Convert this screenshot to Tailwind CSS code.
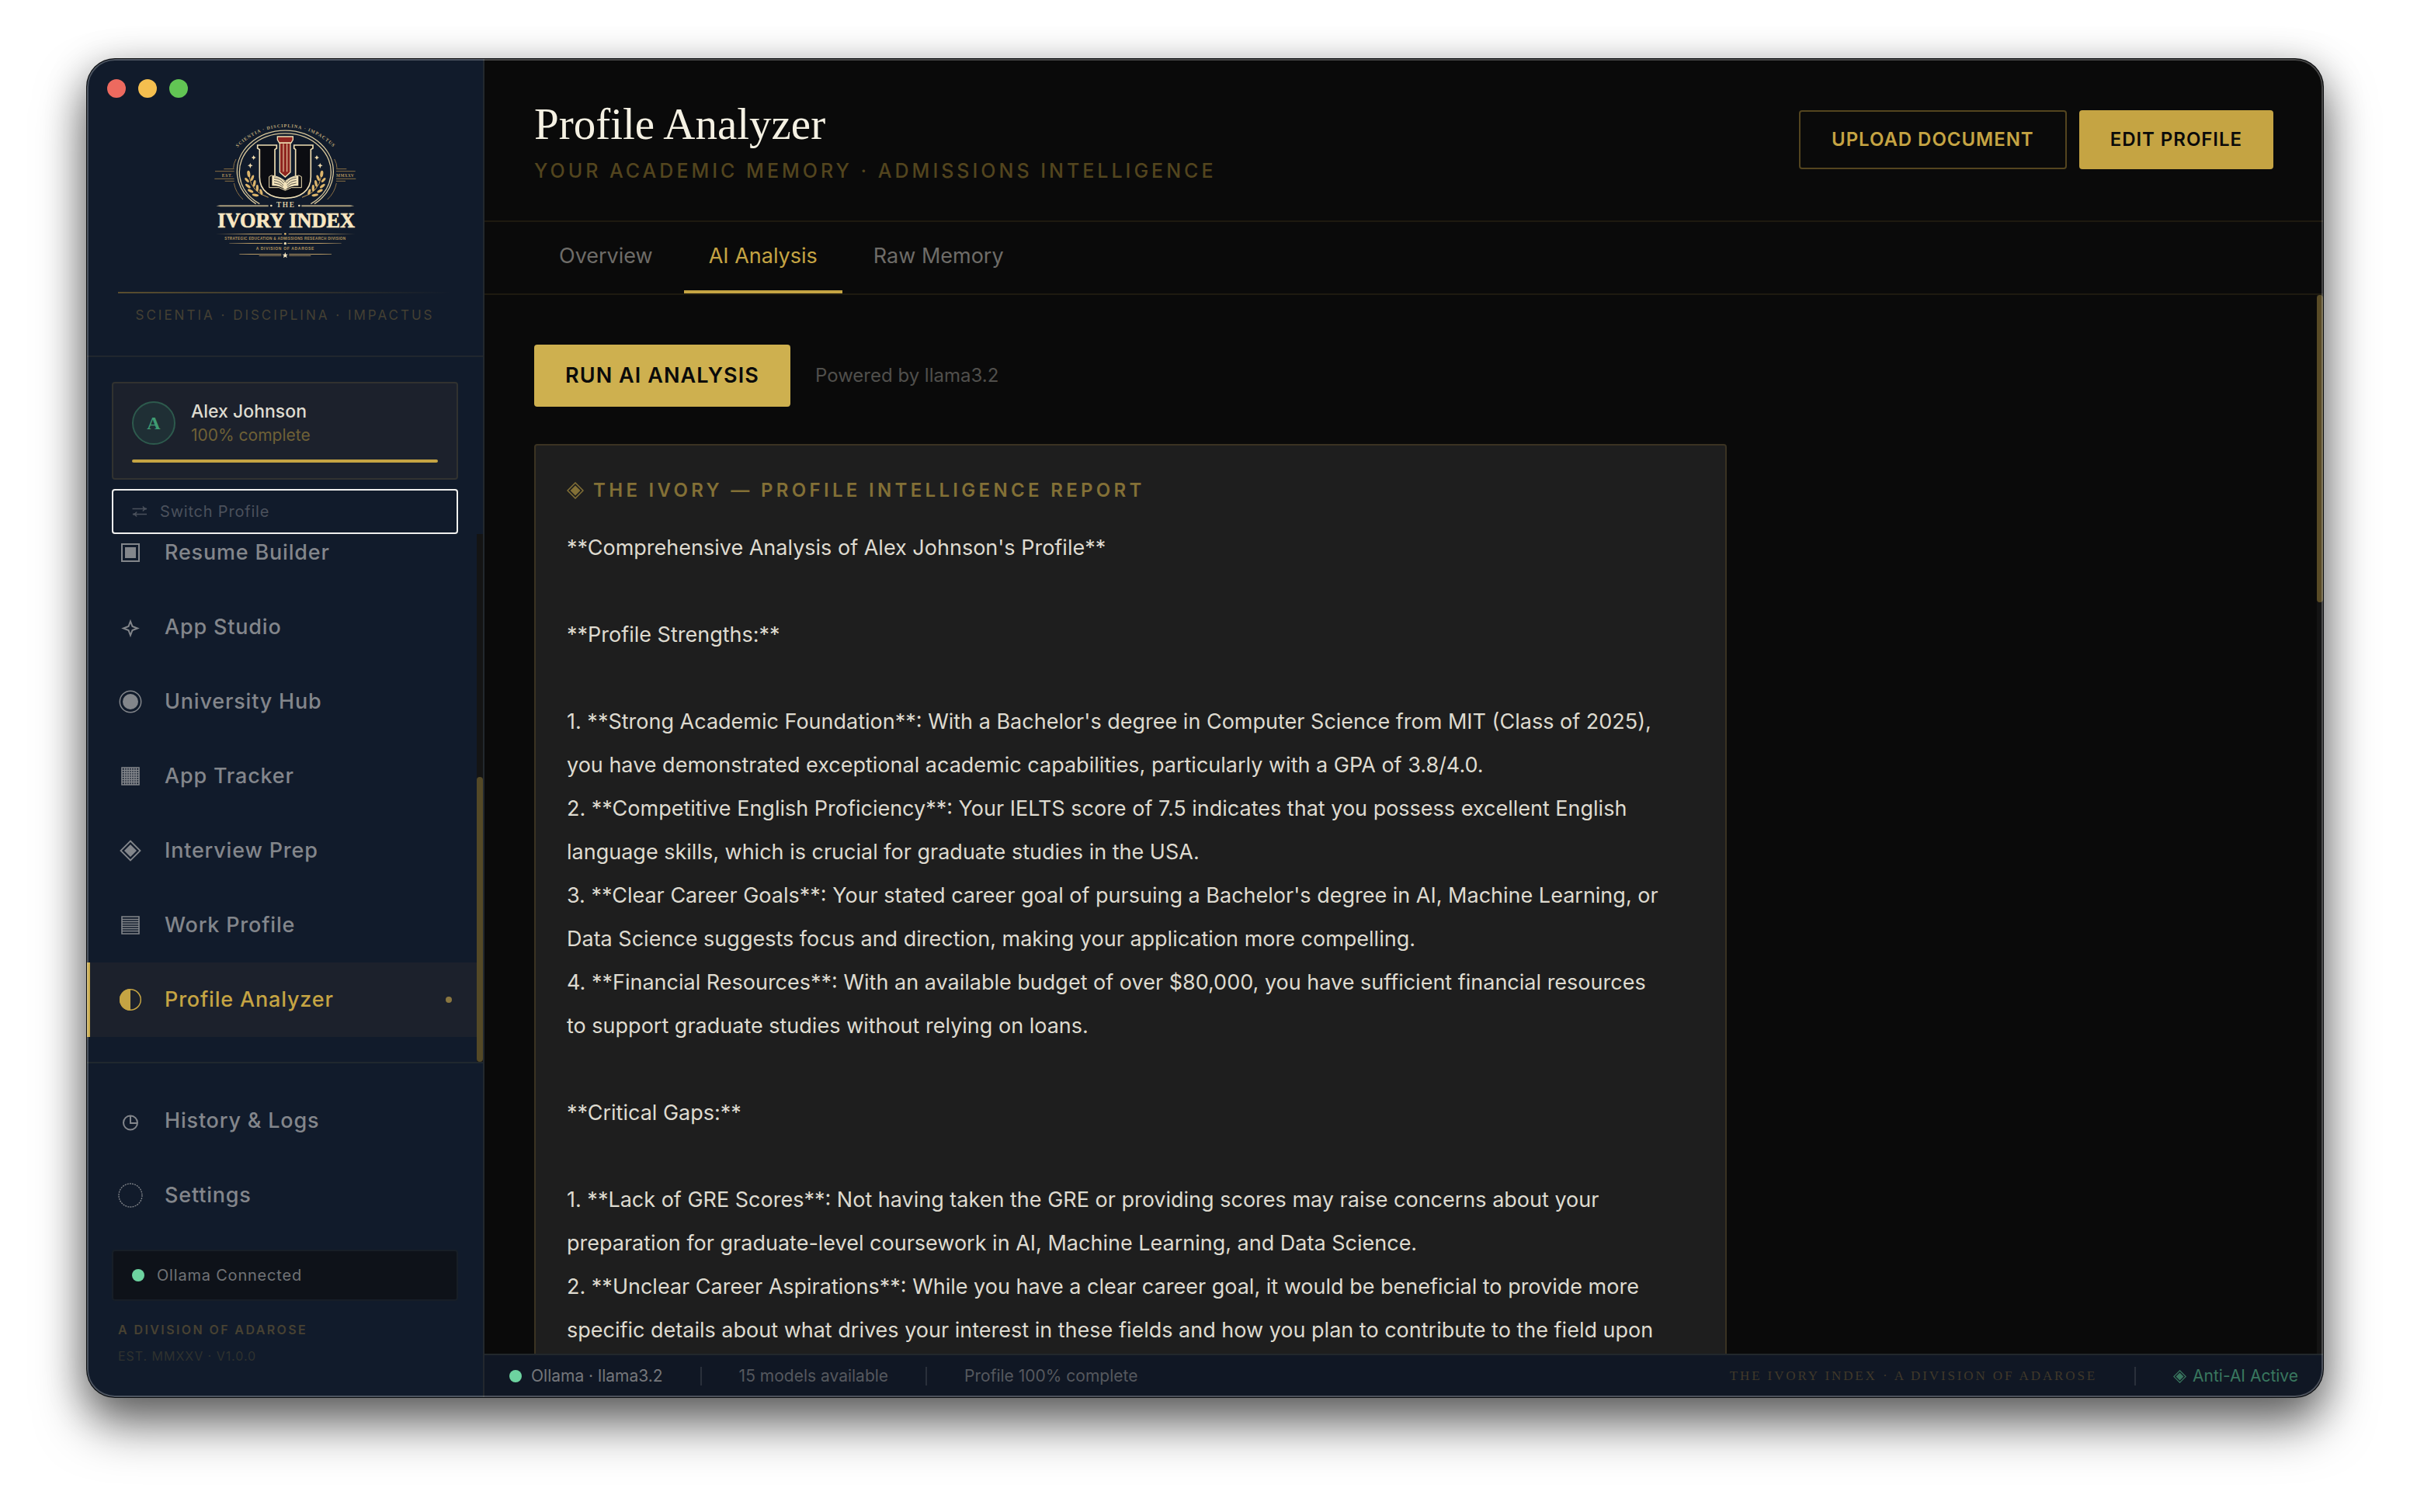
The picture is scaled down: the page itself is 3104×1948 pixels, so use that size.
<!DOCTYPE html>
<html lang="en">
<head>
<meta charset="utf-8">
<title>The Ivory Index</title>
<script src="https://cdn.jsdelivr.net/npm/@tailwindcss/browser@4"></script>
</head>
<body class="bg-white font-['Inter',sans-serif] text-[#dedbd0]">
<div class="h-screen px-28 pt-19 pb-37">
<div class="relative flex h-full overflow-hidden rounded-[36px] bg-[#0a0a0a] shadow-[0_0_0_1px_#0a0c0e,0_36px_64px_rgba(0,0,0,0.5),0_12px_52px_rgba(0,0,0,0.32)]">

  <aside class="flex w-[512px] shrink-0 flex-col border-r-2 border-[#23282e] bg-[#111b2b]">
    <div class="border-b-2 border-[#20262e] pt-[26px] pb-10">
      <div class="flex gap-4 pl-[26px]">
        <button aria-label="Close" class="size-6 rounded-full bg-[#ed6a5f]"></button>
        <button aria-label="Minimize" class="size-6 rounded-full bg-[#f5bf4f]"></button>
        <button aria-label="Zoom" class="size-6 rounded-full bg-[#62c554]"></button>
      </div>
      <svg class="mx-auto mt-[14px] h-[200px] w-[220px]" viewBox="-10 0 660 600" role="img" aria-label="The Ivory Index" fill="none">
        <defs>
          <path id="arc" d="M131 157A258 258 0 0 1 514 157"/>
          <linearGradient id="fade" x1="0" x2="1"><stop offset="0" stop-color="#b99b66" stop-opacity="0"/><stop offset=".25" stop-color="#b99b66"/><stop offset=".75" stop-color="#b99b66"/><stop offset="1" stop-color="#b99b66" stop-opacity="0"/></linearGradient>
          <g id="branch">
            <path d="M182 262Q190 322 256 343" stroke="#c99f58" stroke-width="3"/>
            <g fill="#dcb56c">
              <ellipse cx="180" cy="252" rx="6" ry="13" transform="rotate(-8 180 252)"/>
              <ellipse cx="173" cy="276" rx="5" ry="11" transform="rotate(-42 173 276)"/>
              <ellipse cx="194" cy="268" rx="5" ry="12" transform="rotate(22 194 268)"/>
              <ellipse cx="177" cy="299" rx="5" ry="12" transform="rotate(-52 177 299)"/>
              <ellipse cx="202" cy="289" rx="5" ry="13" transform="rotate(12 202 289)"/>
              <ellipse cx="187" cy="318" rx="5" ry="12" transform="rotate(-64 187 318)"/>
              <ellipse cx="213" cy="307" rx="5" ry="13"/>
              <ellipse cx="206" cy="334" rx="5" ry="13" transform="rotate(-80 206 334)"/>
              <ellipse cx="228" cy="322" rx="5" ry="12" transform="rotate(-18 228 322)"/>
            </g>
            <path d="M199 180l3 6 6 3-6 3-3 6-3-6-6-3 6-3zM186 210l3 7 7 3-7 3-3 8-3-8-7-3 7-3z" fill="#f0dcae"/>
            <path d="M131 195Q121 212 121 230M123 288Q130 325 158 351" stroke="#8a6f45" stroke-width="3"/>
            <path d="M84 233H124M50 242H124M48 271H124M88 280H124" stroke="#8a7044" stroke-width="3"/>
          </g>
        </defs>
        <text font-family="Liberation Serif, serif" font-weight="700" font-size="18" letter-spacing="3" fill="#bfa878"><textPath href="#arc" startOffset="50%" text-anchor="middle">SCIENTIA · DISCIPLINA · IMPACTUS</textPath></text>
        <path d="M208 368A186 158 0 1 1 434 368" stroke="#d8c79b" stroke-width="4"/>
        <path d="M222 368A177 149 0 1 1 420 368" stroke="#d8c79b" stroke-width="4"/>
        <use href="#branch"/>
        <use href="#branch" transform="matrix(-1 0 0 1 642 0)"/>
        <text x="98" y="263" text-anchor="middle" font-family="Liberation Serif, serif" font-weight="700" font-size="17" letter-spacing="2" fill="#b3935c">EST.</text>
        <text x="553" y="263" text-anchor="middle" font-family="Liberation Serif, serif" font-weight="700" font-size="16" letter-spacing="1" fill="#b3935c">MMXXV</text>
        <path d="M214 141H288V153L281 158V280Q281 296 321 296Q361 296 361 280V158L355 153V141H428V153L420 158V264C420 318 378 346 321 346S222 318 222 264V158L214 153Z" fill="#0c0d12" stroke="#f0dfb4" stroke-width="5"/>
        <path d="M300 132H341V246L321 264L300 246Z" fill="#8f2520" stroke="#f0dfb4" stroke-width="4"/>
        <path d="M291 108H351V120L344 132H298L291 120Z" fill="#8f2520" stroke="#f0dfb4" stroke-width="4"/>
        <path d="M314 136V244M328 136V244" stroke="#f0dfb4" stroke-width="3"/>
        <path d="M259 263L268 258Q300 262 321 280Q342 262 374 258L384 263V305H345L321 316L297 305H259Z" fill="#0c0d12" stroke="#f0dfb4" stroke-width="3"/>
        <path d="M270 260Q304 262 321 284Q338 262 372 260V298Q338 298 321 314Q304 298 270 298Z" fill="#f3e3bb"/>
        <path d="M278 268Q304 270 316 288M278 278Q302 280 314 297M278 288Q300 289 312 302M364 268Q338 270 326 288M364 278Q340 280 328 297M364 288Q342 289 330 302" stroke="#14161c" stroke-width="2"/>
        <path d="M54 376L70 373H256V379H70ZM384 373H572L588 376L572 379H384Z" fill="#a99d7d"/>
        <circle cx="267" cy="375" r="4" fill="#f0dfb4"/><circle cx="375" cy="375" r="4" fill="#f0dfb4"/>
        <text x="324" y="382" text-anchor="middle" font-family="Liberation Serif, serif" font-weight="700" font-size="28" letter-spacing="5" fill="#d9c9a0">THE</text>
        <text x="325" y="459" text-anchor="middle" font-family="Liberation Serif, serif" font-weight="700" font-size="79" fill="#f8e7c2" stroke="#f8e7c2" stroke-width="2">IVORY INDEX</text>
        <path d="M52 483H308V486H52ZM334 483H592V486H334ZM105 519H310V522H105ZM330 519H538V522H330ZM144 561H306V564H144ZM336 561H500V564H336ZM220 567H306V569H220ZM336 567H420V569H336Z" fill="url(#fade)"/>
        <circle cx="321" cy="484" r="4" fill="#dcb56c"/><circle cx="321" cy="521" r="5" fill="#f0dfb4"/>
        <path d="M321 555l3 8h8l-6 5 2 9-7-5-7 5 2-9-6-5h8z" fill="#f8e7c2"/>
        <text x="321" y="508" text-anchor="middle" font-family="Liberation Sans, sans-serif" font-weight="700" font-size="14" letter-spacing="1" fill="#b3935c">STRATEGIC EDUCATION &amp; ADMISSIONS RESEARCH DIVISION</text>
        <text x="321" y="547" text-anchor="middle" font-family="Liberation Sans, sans-serif" font-weight="700" font-size="15" letter-spacing="2" fill="#b3935c">A DIVISION OF ADAROSE</text>
      </svg>
      <div class="mx-10 mt-9 h-0.5 bg-linear-to-r from-[#5a4e2f] to-transparent"></div>
      <p class="mt-4 text-center text-[17px] leading-6 tracking-[3px] text-[#444033]">SCIENTIA · DISCIPLINA · IMPACTUS</p>
    </div>

    <div class="flex flex-col gap-3 px-8 pt-8">
      <section class="rounded-[4px] border-2 border-[#313230] bg-[#1c212c] px-6 py-5">
        <div class="flex items-center gap-5">
          <div class="flex size-14 items-center justify-center rounded-full border-2 border-[#2d5a4d] bg-[#1f2f35] font-['Liberation_Serif',serif] text-2xl font-bold text-[#3f9b73]">A</div>
          <div>
            <p class="text-[23px] leading-8 font-medium">Alex Johnson</p>
            <p class="text-[21px] leading-[30px] text-[#6e6036]">100% complete</p>
          </div>
        </div>
        <div class="mt-4 h-1 rounded-full bg-[#c5a443]"></div>
      </section>
      <button class="flex h-[58px] items-center gap-4 rounded-[4px] border-2 border-[#f0f0ee] px-6 text-[20px] tracking-[0.04em] text-[#4b515c]">
        <svg class="h-5 w-5" viewBox="0 0 20 20" fill="none" stroke="currentColor" stroke-width="1.5"><path d="M0.5 6.5H19M14 3.5Q15 6 19 6.5Q15 7 14 9.500M19 13.500H1M6 10.500Q5 13 1 13.500Q5 14 6 16.500"/></svg>
        Switch Profile
      </button>
    </div>

    <nav class="flex min-h-0 flex-1 overflow-hidden">
      <div class="flex min-w-0 flex-1 flex-col justify-end overflow-hidden pb-8 text-[27px] font-medium tracking-[0.03em] text-[#83868b]">
        <a href="#" class="flex h-24 shrink-0 items-center gap-7 border-l-4 border-transparent pr-8 pl-9">
          <svg class="size-8" viewBox="0 0 32 32" fill="none" stroke="currentColor" stroke-width="2"><path d="M5 5H27V27H5Z"/><path d="M9 9H23V23H9Z" fill="currentColor" stroke="none"/></svg>Resume Builder</a>
        <a href="#" class="flex h-24 shrink-0 items-center gap-7 border-l-4 border-transparent pr-8 pl-9">
          <svg class="size-8" viewBox="0 0 32 32" fill="none" stroke="currentColor" stroke-width="2"><path d="M16 8.500L18.500 15L25 17.500L18.500 20L16 26.500L13.500 20L7 17.500L13.500 15Z"/></svg>App Studio</a>
        <a href="#" class="flex h-24 shrink-0 items-center gap-7 border-l-4 border-transparent pr-8 pl-9">
          <svg class="size-8" viewBox="0 0 32 32" fill="none" stroke="currentColor" stroke-width="1.5"><circle cx="16" cy="16" r="13.700"/><circle cx="16" cy="16" r="10" fill="currentColor" stroke="none"/></svg>University Hub</a>
        <a href="#" class="flex h-24 shrink-0 items-center gap-7 border-l-4 border-transparent pr-8 pl-9">
          <svg class="size-8" viewBox="0 0 32 32" fill="none" stroke="currentColor" stroke-width="1.600"><path d="M5 5H27V27H5ZM8.500 5V27M11.500 5V27M14.500 5V27M17.500 5V27M20.500 5V27M23.500 5V27M5 8.500H27M5 11.500H27M5 14.500H27M5 17.500H27M5 20.500H27M5 23.500H27"/></svg>App Tracker</a>
        <a href="#" class="flex h-24 shrink-0 items-center gap-7 border-l-4 border-transparent pr-8 pl-9">
          <svg class="size-8" viewBox="0 0 32 32" fill="none" stroke="currentColor" stroke-width="1.800"><path d="M16 3.500L28.500 16L16 28.500L3.500 16Z"/><path d="M16 8L24 16L16 24L8 16Z" fill="currentColor" stroke="none"/></svg>Interview Prep</a>
        <a href="#" class="flex h-24 shrink-0 items-center gap-7 border-l-4 border-transparent pr-8 pl-9">
          <svg class="size-8" viewBox="0 0 32 32" fill="none" stroke="currentColor" stroke-width="1.600"><path d="M5 5H27V27H5ZM5 8.500H27M5 11.500H27M5 14.500H27M5 17.500H27M5 20.500H27M5 23.500H27"/></svg>Work Profile</a>
        <a href="#" aria-current="page" class="flex h-24 shrink-0 items-center gap-7 border-l-4 border-[#c9aa4b] bg-[#1c212c] pr-8 pl-9 text-[#c5a443]">
          <svg class="size-8" viewBox="0 0 32 32" fill="none" stroke="currentColor" stroke-width="1.500"><circle cx="16" cy="16" r="13.300"/><path d="M16 2A14 14 0 0 0 16 30Z" fill="currentColor" stroke="none"/></svg>Profile Analyzer
          <span class="ml-auto size-2 rounded-full bg-[#8a7640]"></span></a>
      </div>
      <div class="flex w-2 flex-col justify-end bg-[#141414]"><div class="h-[54%] rounded-full bg-[#544926]"></div></div>
    </nav>

    <div class="border-t-2 border-[#20282f] pt-[26px] pb-10">
      <div class="text-[27px] font-medium tracking-[0.03em] text-[#83868b]">
        <a href="#" class="flex h-24 items-center gap-7 border-l-4 border-transparent pr-8 pl-9">
          <svg class="size-8" viewBox="0 0 32 32" fill="none" stroke="currentColor" stroke-width="2"><circle cx="16" cy="18.500" r="9"/><path d="M16 9.500V19H25"/></svg>History &amp; Logs</a>
        <a href="#" class="flex h-24 items-center gap-7 border-l-4 border-transparent pr-8 pl-9">
          <svg class="size-8" viewBox="0 0 32 32" fill="none" stroke="currentColor" stroke-width="1.300"><circle cx="16" cy="16" r="15" stroke-dasharray="2 1.140"/></svg>Settings</a>
      </div>
      <div class="mx-8 mt-[22px] flex h-[66px] items-center gap-4 rounded-[4px] border-2 border-[#171e27] bg-[#0e1219] px-6 text-[20px] tracking-[0.04em] text-[#707276]">
        <span class="size-4 rounded-full bg-[#6dd3a0]"></span>Ollama Connected
      </div>
      <p class="mx-10 mt-6 text-base leading-[26px] font-semibold tracking-[0.15em] text-[#484232]">A DIVISION OF ADAROSE</p>
      <p class="mx-10 mt-2 text-base leading-[26px] tracking-[0.06em] text-[#2f322f]">EST. MMXXV · V1.0.0</p>
    </div>
  </aside>

  <div class="flex min-w-0 flex-1 flex-col">
    <header class="flex items-start justify-between border-b-2 border-[#1e1a10] px-16 pt-12 pb-12">
      <div>
        <h1 class="font-['Liberation_Serif',serif] text-[57px] leading-[72px] text-[#f5f1e3]">Profile Analyzer</h1>
        <p class="mt-2 text-[25px] leading-8 font-medium tracking-[4px] text-[#53451e]">YOUR ACADEMIC MEMORY · ADMISSIONS INTELLIGENCE</p>
      </div>
      <div class="mt-[18px] flex gap-4 text-2xl font-semibold tracking-[0.04em]">
        <button class="h-[76px] rounded-[4px] border-2 border-[#54451f] px-10 text-[#c5a443]">UPLOAD DOCUMENT</button>
        <button class="h-[76px] rounded-[4px] bg-[#c5a443] px-10 text-[#0a0a0a]">EDIT PROFILE</button>
      </div>
    </header>
    <div role="tablist" class="flex gap-2 border-b-2 border-[#1e1a10] px-16 text-[27px] leading-[40px] text-[#6e6c68]">
      <button role="tab" class="border-b-4 border-transparent px-8 pt-6 pb-6">Overview</button>
      <button role="tab" aria-selected="true" class="border-b-4 border-[#c5a443] px-8 pt-6 pb-6 text-[#c5a443]">AI Analysis</button>
      <button role="tab" class="border-b-4 border-transparent px-8 pt-6 pb-6">Raw Memory</button>
    </div>
    <div class="flex min-h-0 flex-1">
      <main class="min-w-0 flex-1 overflow-hidden px-16 pt-16">
        <div class="flex items-center gap-8">
          <button class="h-20 rounded-[4px] bg-[#ceb04f] px-10 text-[27px] font-semibold tracking-[0.04em] text-[#0a0a0a]">RUN AI ANALYSIS</button>
          <span class="text-2xl text-[#504f4c]">Powered by llama3.2</span>
        </div>
        <article class="mt-12 w-full max-w-[1536px] rounded-[4px] border-2 border-[#3b3322] bg-[#1e1e1e] px-10 pt-10 pb-10">
          <h2 class="flex items-center gap-3 text-2xl leading-9 font-semibold tracking-[0.18em] text-[#837036]">
            <svg class="size-[22px]" viewBox="0 0 22 22" fill="none" stroke="currentColor" stroke-width="1.500"><path d="M11 1L21 11L11 21L1 11Z"/><path d="M11 4.500L17.500 11L11 17.500L4.500 11Z" fill="currentColor" stroke="none"/></svg>THE IVORY — PROFILE INTELLIGENCE REPORT</h2>
          <div class="mt-7 pr-10 text-[27px] leading-[56px] whitespace-pre-line">**Comprehensive Analysis of Alex Johnson's Profile**

**Profile Strengths:**

1. **Strong Academic Foundation**: With a Bachelor's degree in Computer Science from MIT (Class of 2025), you have demonstrated exceptional academic capabilities, particularly with a GPA of 3.8/4.0.
2. **Competitive English Proficiency**: Your IELTS score of 7.5 indicates that you possess excellent English language skills, which is crucial for graduate studies in the USA.
3. **Clear Career Goals**: Your stated career goal of pursuing a Bachelor's degree in AI, Machine Learning, or Data Science suggests focus and direction, making your application more compelling.
4. **Financial Resources**: With an available budget of over $80,000, you have sufficient financial resources to support graduate studies without relying on loans.

**Critical Gaps:**

1. **Lack of GRE Scores**: Not having taken the GRE or providing scores may raise concerns about your preparation for graduate-level coursework in AI, Machine Learning, and Data Science.
2. **Unclear Career Aspirations**: While you have a clear career goal, it would be beneficial to provide more specific details about what drives your interest in these fields and how you plan to contribute to the field upon</div>
        </article>
      </main>
      <div class="w-2 bg-[#141414]"><div class="h-[29%] rounded-full bg-[#594b26]"></div></div>
    </div>
    <footer class="flex h-[56px] shrink-0 items-center gap-12 border-t-2 border-[#22282c] bg-[#101724] px-8 text-[21px] text-[#55585e]">
      <span class="flex items-center gap-3 text-[#74767a]"><span class="size-4 rounded-full bg-[#6dd3a0]"></span>Ollama · llama3.2</span>
      <span class="h-6 w-0.5 bg-[#2a303b]"></span>
      <span>15 models available</span>
      <span class="h-6 w-0.5 bg-[#2a303b]"></span>
      <span>Profile 100% complete</span>
      <span class="ml-auto font-['Liberation_Serif',serif] text-[17px] tracking-[0.17em] text-[#40392a]">THE IVORY INDEX · A DIVISION OF ADAROSE</span>
      <span class="h-6 w-0.5 bg-[#2a303b]"></span>
      <span class="flex items-center gap-2 text-[#39775f]"><svg class="size-[17px]" viewBox="0 0 22 22" fill="none" stroke="currentColor" stroke-width="1.500"><path d="M11 1L21 11L11 21L1 11Z"/><path d="M11 4.500L17.500 11L11 17.500L4.500 11Z" fill="currentColor" stroke="none"/></svg>Anti-AI Active</span>
    </footer>
  </div>

  <!-- window edge highlight -->
  <div class="pointer-events-none absolute inset-0 rounded-[36px] border-2 border-white/25"></div>
</div>
</div>
</body>
</html>
